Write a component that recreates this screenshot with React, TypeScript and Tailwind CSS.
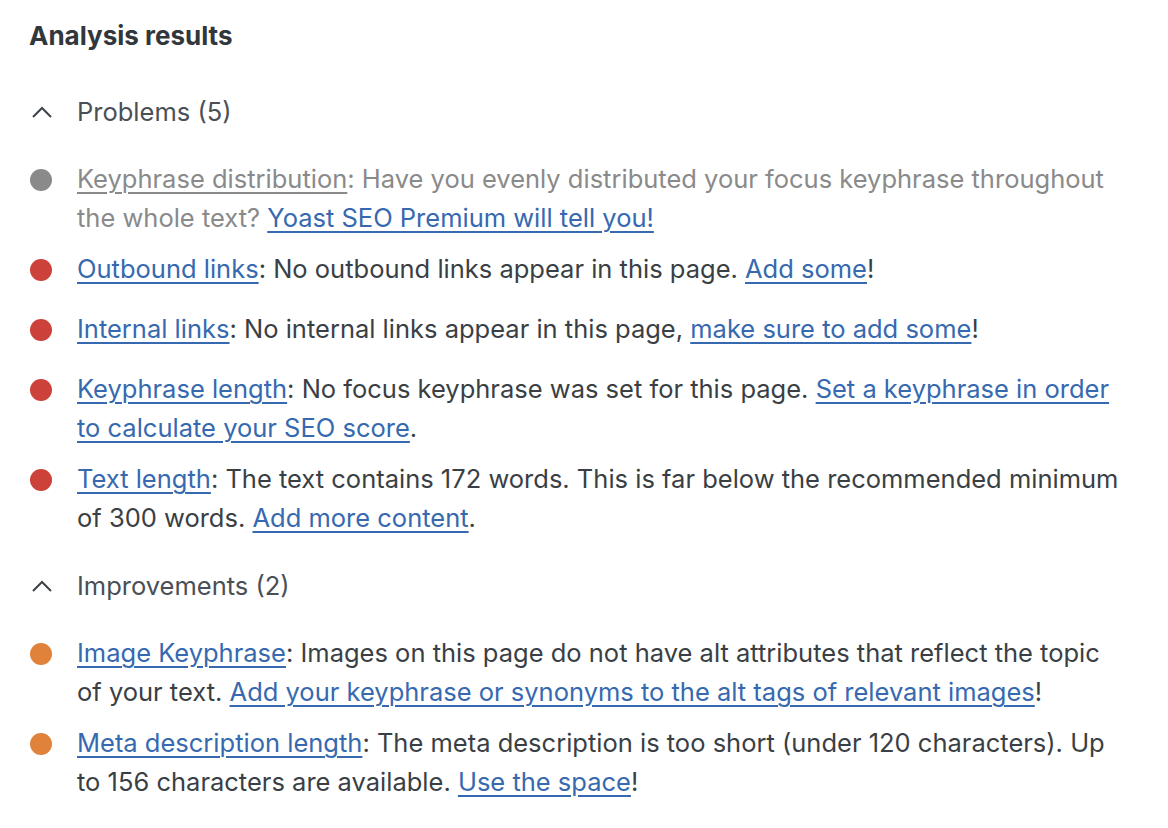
import React from "react";

const Link = ({ children, gray }: { children: React.ReactNode; gray?: boolean }) => (
  <a
    href="#"
    className={
      gray
        ? "text-[#8a8a8a] underline decoration-[2px] underline-offset-[4px]"
        : "text-[#3669af] underline decoration-[2px] underline-offset-[4px]"
    }
  >
    {children}
  </a>
);

const Chevron = () => (
  <svg width="22" height="14" viewBox="0 0 22 14" fill="none" className="ml-[31px]">
    <path d="M2 12 L11 3 L20 12" stroke="#3c434a" strokeWidth="2" />
  </svg>
);

const Item = ({ color, gray, children }: { color: string; gray?: boolean; children: React.ReactNode }) => (
  <li className="flex min-h-[48px]">
    <span className="w-[22px] h-[22px] rounded-full shrink-0 ml-[30px] mt-[10px]" style={{ backgroundColor: color }} />
    <p className={"ml-[25px] w-[1046px] text-[25.5px] leading-[39px] " + (gray ? "text-[#8a8a8a]" : "text-[#3a3f45]")}>
      {children}
    </p>
  </li>
);

const Header = ({ children }: { children: React.ReactNode }) => (
  <div className="flex items-center h-[39px]">
    <Chevron />
    <span className="ml-[24px] text-[25.5px] leading-[39px] text-[#4a4f55]">{children}</span>
  </div>
);

export default function App() {
  const red = "#cc413a";
  const orange = "#e0823a";
  return (
    <div className="w-[1168px] h-[828px] bg-white" style={{ fontFamily: "Inter, 'Noto Sans', sans-serif" }}>
      <div className="pt-[16px]">
        <h2 className="ml-[29px] text-[26px] leading-[39px] font-bold text-[#32373c]">Analysis results</h2>
        <div className="mt-[37px]">
          <Header>Problems (5)</Header>
        </div>
        <ul className="mt-[28px] flex flex-col gap-[12px]">
          <Item color="#8a8a8a" gray>
            <Link gray>Keyphrase distribution</Link>: Have you evenly distributed your focus keyphrase throughout the whole text?{" "}
            <Link>Yoast SEO Premium will tell you!</Link>
          </Item>
          <Item color={red}>
            <Link>Outbound links</Link>: No outbound links appear in this page. <Link>Add some</Link>!
          </Item>
          <Item color={red}>
            <Link>Internal links</Link>: No internal links appear in this page, <Link>make sure to add some</Link>!
          </Item>
          <Item color={red}>
            <Link>Keyphrase length</Link>: No focus keyphrase was set for this page.{" "}
            <Link>Set a keyphrase in order to calculate your SEO score</Link>.
          </Item>
          <Item color={red}>
            <Link>Text length</Link>: The text contains 172 words. This is far below the recommended minimum of 300 words.{" "}
            <Link>Add more content</Link>.
          </Item>
        </ul>
        <div className="mt-[29px]">
          <Header>Improvements (2)</Header>
        </div>
        <ul className="mt-[28px] flex flex-col gap-[12px]">
          <Item color={orange}>
            <Link>Image Keyphrase</Link>: Images on this page do not have alt attributes that reflect the topic of your text.{" "}
            <Link>Add your keyphrase or synonyms to the alt tags of relevant images</Link>!
          </Item>
          <Item color={orange}>
            <Link>Meta description length</Link>: The meta description is too short (under 120 characters). Up to 156 characters are available.{" "}
            <Link>Use the space</Link>!
          </Item>
        </ul>
      </div>
    </div>
  );
}
